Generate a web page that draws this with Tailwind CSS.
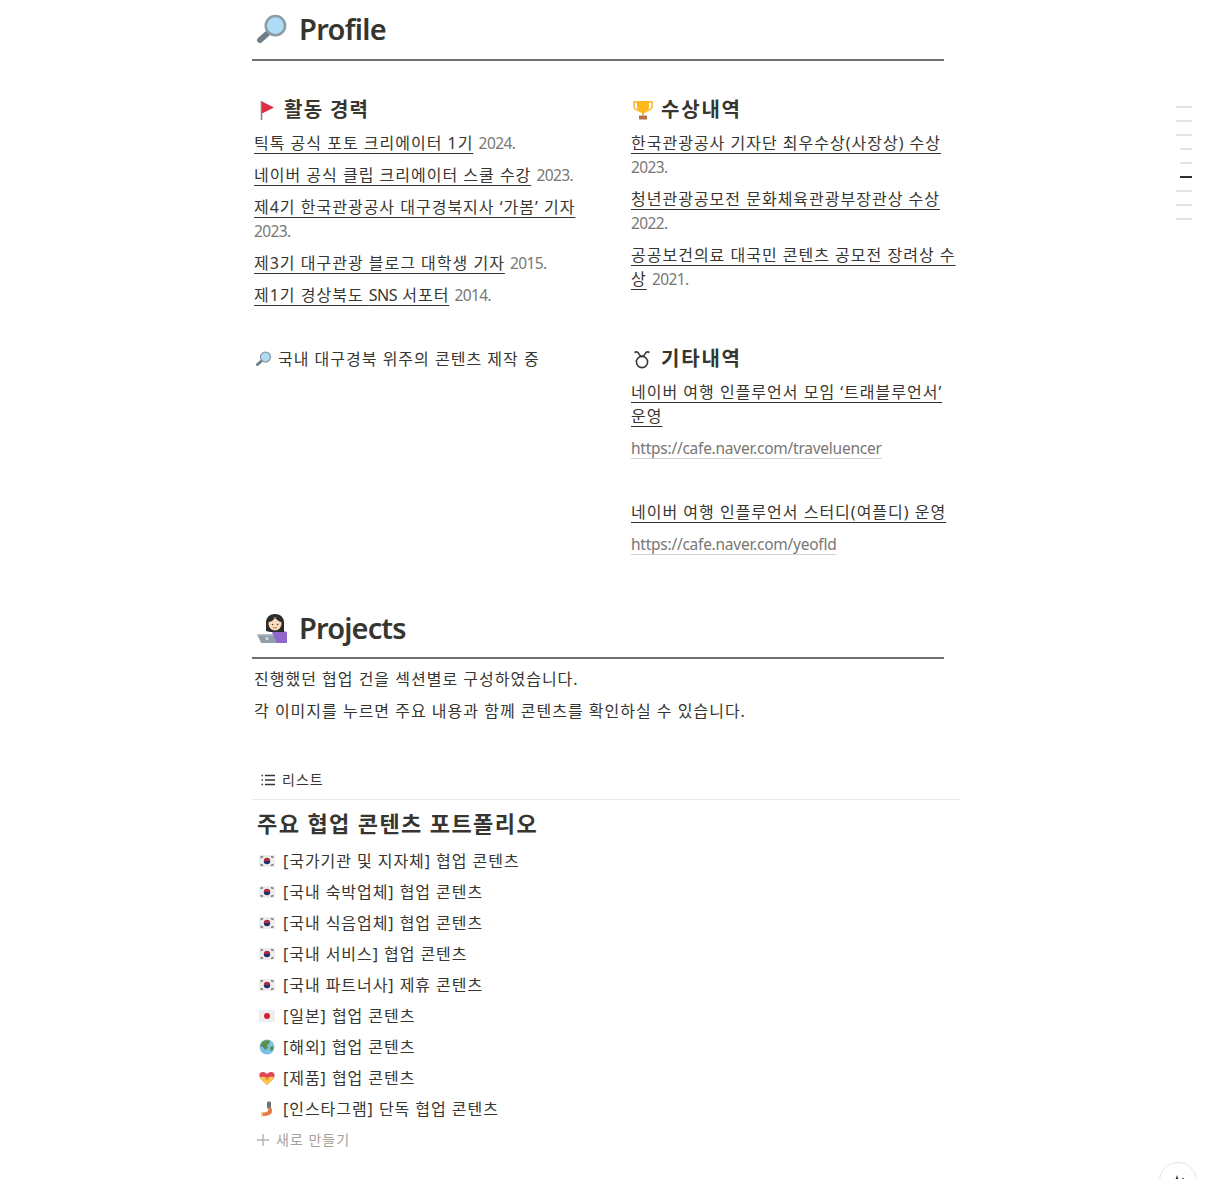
<!doctype html>
<html lang="ko">
<head>
    <meta charset="UTF-8">
    <title>Portfolio</title>
    <script src="https://cdn.jsdelivr.net/npm/@tailwindcss/browser@4"></script>
</head>
<body class="bg-white">
<div class="relative h-[1179px] overflow-hidden font-['Noto_Sans','Noto_Sans_CJK_KR',sans-serif] text-[16px] leading-6 tracking-[1px] text-[#37352f]">
    <main class="ml-[252px] w-[708px]">
        <!-- profile -->
        <div class="w-[692px] h-[61px] border-b-2 border-[#6f6f6f] flex items-center gap-[11px] pl-[5px] pb-[1px]">
            <svg class="w-[31px] h-[31px]" viewBox="0 0 32 32">
                <path d="M12 19 L3 27" stroke="#6f7f8a" stroke-width="6" stroke-linecap="round"/>
                <circle cx="19" cy="12" r="10" fill="#aedcf7" stroke="#8b9ba6" stroke-width="2.5"/>
            </svg>
            <h1 class="text-[29px] leading-10 font-semibold tracking-[-0.7px]">Profile</h1>
        </div>

        <div class="flex gap-[46px] mt-[33px]">
            <section class="w-[331px] px-[2px]">
                <h3 class="flex items-center gap-[6px] text-[20px] leading-[32px] font-bold tracking-[1.3px] pl-[4px]">
                    <svg class="w-[20px] h-[20px]" viewBox="0 0 20 20">
                        <path d="M3.5 1 V20" stroke="#7d8890" stroke-width="1.6"/>
                        <path d="M4 1.5 L16 7.5 L4 13.5 Z" fill="#dd2e44"/>
                    </svg>
                    활동 경력
                </h3>
                <div class="flex flex-col gap-2 mt-[5px]">
                    <p><span class="underline underline-offset-[4px] [text-decoration-skip-ink:none]">틱톡 공식 포토 크리에이터 1기</span> <span class="text-[#787774] text-[15.5px] tracking-[-0.6px]">2024.</span></p>
                    <p><span class="underline underline-offset-[4px] [text-decoration-skip-ink:none]">네이버 공식 클립 크리에이터 스쿨 수강</span> <span class="text-[#787774] text-[15.5px] tracking-[-0.6px]">2023.</span></p>
                    <p><span class="underline underline-offset-[4px] [text-decoration-skip-ink:none]">제4기 한국관광공사 대구경북지사 ‘가봄’ 기자</span> <span class="text-[#787774] text-[15.5px] tracking-[-0.6px]">2023.</span></p>
                    <p><span class="underline underline-offset-[4px] [text-decoration-skip-ink:none]">제3기 대구관광 블로그 대학생 기자</span> <span class="text-[#787774] text-[15.5px] tracking-[-0.6px]">2015.</span></p>
                    <p><span class="underline underline-offset-[4px] [text-decoration-skip-ink:none]">제1기 경상북도 <span class="tracking-[-0.5px]">SNS</span> 서포터</span> <span class="text-[#787774] text-[15.5px] tracking-[-0.6px]">2014.</span></p>
                </div>
                <p class="flex items-center gap-[6px] mt-[40px] pl-[2px]">
                    <svg class="w-[16px] h-[16px]" viewBox="0 0 32 32">
                        <path d="M12 19 L3 27" stroke="#6f7f8a" stroke-width="6" stroke-linecap="round"/>
                        <circle cx="19" cy="12" r="10" fill="#aedcf7" stroke="#8b9ba6" stroke-width="2.5"/>
                    </svg>
                    국내 대구경북 위주의 콘텐츠 제작 중
                </p>
            </section>

            <section class="w-[331px] px-[2px]">
                <h3 class="flex items-center gap-[8px] text-[20px] leading-[32px] font-bold tracking-[1.8px]">
                    <svg class="w-[20px] h-[20px] ml-[2px]" viewBox="0 0 20 20">
                        <path d="M4 2 H1 V6 Q1 10 6 10.5 M16 2 H19 V6 Q19 10 14 10.5" fill="none" stroke="#f9c04a" stroke-width="1.8"/>
                        <path d="M4 1 H16 V7 Q16 12 11 13 V15 H9 V13 Q4 12 4 7 Z" fill="#fcb91e"/>
                        <path d="M6 15.5 H14 V19.5 H6 Z" fill="#b5704a"/>
                    </svg>
                    수상내역
                </h3>
                <div class="flex flex-col gap-2 mt-[5px]">
                    <p><span class="underline underline-offset-[4px] [text-decoration-skip-ink:none]">한국관광공사 기자단 최우수상(사장상) 수상</span> <span class="text-[#787774] text-[15.5px] tracking-[-0.6px]">2023.</span></p>
                    <p><span class="underline underline-offset-[4px] [text-decoration-skip-ink:none]">청년관광공모전 문화체육관광부장관상 수상</span> <span class="text-[#787774] text-[15.5px] tracking-[-0.6px]">2022.</span></p>
                    <p><span class="underline underline-offset-[4px] [text-decoration-skip-ink:none]">공공보건의료 대국민 콘텐츠 공모전 장려상 수상</span> <span class="text-[#787774] text-[15.5px] tracking-[-0.6px]">2021.</span></p>
                </div>
                <h3 class="flex items-center gap-[8px] text-[20px] leading-[32px] font-bold tracking-[1.8px] mt-[52px]">
                    <svg class="w-[20px] h-[20px] ml-[2px]" viewBox="0 0 20 20" fill="none" stroke="#37352f" stroke-width="1.6">
                        <circle cx="9" cy="13" r="5.6"/>
                        <path d="M1.5 3.5 Q4.5 1.8 6 5 Q7 7.4 9 7.4 Q11 7.4 12 5 Q13.5 1.8 16.5 3.5"/>
                    </svg>
                    기타내역
                </h3>
                <div class="flex flex-col gap-2 mt-[5px]">
                    <p class="underline underline-offset-[4px] [text-decoration-skip-ink:none]">네이버 여행 인플루언서 모임 ‘트래블루언서’ 운영</p>
                    <p class="text-[#787774] text-[15.5px] tracking-[-0.25px] underline decoration-[#d3d3d1] underline-offset-[4px] [text-decoration-skip-ink:none]">https://cafe.naver.com/traveluencer</p>
                    <p class="mt-[32px] underline underline-offset-[4px] [text-decoration-skip-ink:none]">네이버 여행 인플루언서 스터디(여플디) 운영</p>
                    <p class="text-[#787774] text-[15.5px] tracking-[-0.25px] underline decoration-[#d3d3d1] underline-offset-[4px] [text-decoration-skip-ink:none]">https://cafe.naver.com/yeofld</p>
                </div>
            </section>
        </div>

        <!-- projects -->
        <div class="w-[692px] h-[61px] border-b-2 border-[#6f6f6f] flex items-center gap-[11px] pl-[4px] mt-[42px]">
            <svg class="w-[32px] h-[32px]" viewBox="0 0 32 32">
                <path d="M16 15 Q22 15 24 18 L31 20 V31 H17 Z" fill="#9266cc"/>
                <path d="M10 19 V10 Q11 2 19 2 Q27 2 28 10 V20 L24 20 H14 Z" fill="#2b2b2b"/>
                <circle cx="19" cy="12" r="6.5" fill="#fadcbc"/>
                <path d="M13 10 Q17 9 19 6 Q22 9 25 10 L25 6 H13 Z" fill="#2b2b2b"/>
                <circle cx="16.5" cy="12.5" r="0.8" fill="#60352a"/>
                <circle cx="21.5" cy="12.5" r="0.8" fill="#60352a"/>
                <path d="M17 15.5 Q19 16.8 21 15.5" stroke="#c1694f" fill="none"/>
                <path d="M1 22 H17 L21 31 H5 Z" fill="#8f9ea8"/>
                <path d="M1 22 H17 V23.5 H1 Z" fill="#b6c2ca"/>
                <circle cx="11" cy="26.5" r="1.6" fill="#d5dde2"/>
            </svg>
            <h1 class="text-[29px] leading-10 font-semibold tracking-[-0.85px]">Projects</h1>
        </div>
        <div class="flex flex-col gap-2 mt-[8px] px-[2px]">
            <p>진행했던 협업 건을 섹션별로 구성하였습니다.</p>
            <p>각 이미지를 누르면 주요 내용과 함께 콘텐츠를 확인하실 수 있습니다.</p>
        </div>

        <!-- list view -->
        <div class="flex items-center gap-[7px] mt-[44px] h-[24px] pt-[2px] pl-[9px] text-[14px]">
            <svg class="w-[14px] h-[14px]" viewBox="0 0 14 14" fill="none" stroke="#37352f" stroke-width="1.4">
                <path d="M4 2.5 H14 M4 7 H14 M4 11.5 H14"/>
                <path d="M0.5 2.5 H2 M0.5 7 H2 M0.5 11.5 H2"/>
            </svg>
            리스트
        </div>
        <div class="h-px bg-[#e9e9e7] mt-[8px]"></div>
        <h2 class="text-[22px] leading-[30px] font-bold tracking-[1.4px] pl-[5px] mt-[8px]">주요 협업 콘텐츠 포트폴리오</h2>
        <ul class="mt-[7px] flex flex-col tracking-[0.95px]">
            <li class="h-[31px] flex items-center gap-[8px] pl-[7px]">
                <svg class="w-[16px] h-[16px]" viewBox="0 0 16 16"><rect y="2" width="16" height="12" fill="#eeeeee"/><path d="M4.8 8 a3.2 3.2 0 0 1 6.4 0Z" fill="#b02a3f"/><path d="M4.8 8 a3.2 3.2 0 0 0 6.4 0Z" fill="#1f2f70"/><path d="M1.5 4.5 L4 3.5 M1.5 11.5 L4 12.5 M12 3.5 L14.5 4.5 M12 12.5 L14.5 11.5" stroke="#777" stroke-width="1.4"/></svg>
                [국가기관 및 지자체] 협업 콘텐츠
            </li>
            <li class="h-[31px] flex items-center gap-[8px] pl-[7px]">
                <svg class="w-[16px] h-[16px]" viewBox="0 0 16 16"><rect y="2" width="16" height="12" fill="#eeeeee"/><path d="M4.8 8 a3.2 3.2 0 0 1 6.4 0Z" fill="#b02a3f"/><path d="M4.8 8 a3.2 3.2 0 0 0 6.4 0Z" fill="#1f2f70"/><path d="M1.5 4.5 L4 3.5 M1.5 11.5 L4 12.5 M12 3.5 L14.5 4.5 M12 12.5 L14.5 11.5" stroke="#777" stroke-width="1.4"/></svg>
                [국내 숙박업체] 협업 콘텐츠
            </li>
            <li class="h-[31px] flex items-center gap-[8px] pl-[7px]">
                <svg class="w-[16px] h-[16px]" viewBox="0 0 16 16"><rect y="2" width="16" height="12" fill="#eeeeee"/><path d="M4.8 8 a3.2 3.2 0 0 1 6.4 0Z" fill="#b02a3f"/><path d="M4.8 8 a3.2 3.2 0 0 0 6.4 0Z" fill="#1f2f70"/><path d="M1.5 4.5 L4 3.5 M1.5 11.5 L4 12.5 M12 3.5 L14.5 4.5 M12 12.5 L14.5 11.5" stroke="#777" stroke-width="1.4"/></svg>
                [국내 식음업체] 협업 콘텐츠
            </li>
            <li class="h-[31px] flex items-center gap-[8px] pl-[7px]">
                <svg class="w-[16px] h-[16px]" viewBox="0 0 16 16"><rect y="2" width="16" height="12" fill="#eeeeee"/><path d="M4.8 8 a3.2 3.2 0 0 1 6.4 0Z" fill="#b02a3f"/><path d="M4.8 8 a3.2 3.2 0 0 0 6.4 0Z" fill="#1f2f70"/><path d="M1.5 4.5 L4 3.5 M1.5 11.5 L4 12.5 M12 3.5 L14.5 4.5 M12 12.5 L14.5 11.5" stroke="#777" stroke-width="1.4"/></svg>
                [국내 서비스] 협업 콘텐츠
            </li>
            <li class="h-[31px] flex items-center gap-[8px] pl-[7px]">
                <svg class="w-[16px] h-[16px]" viewBox="0 0 16 16"><rect y="2" width="16" height="12" fill="#eeeeee"/><path d="M4.8 8 a3.2 3.2 0 0 1 6.4 0Z" fill="#b02a3f"/><path d="M4.8 8 a3.2 3.2 0 0 0 6.4 0Z" fill="#1f2f70"/><path d="M1.5 4.5 L4 3.5 M1.5 11.5 L4 12.5 M12 3.5 L14.5 4.5 M12 12.5 L14.5 11.5" stroke="#777" stroke-width="1.4"/></svg>
                [국내 파트너사] 제휴 콘텐츠
            </li>
            <li class="h-[31px] flex items-center gap-[8px] pl-[7px]">
                <svg class="w-[16px] h-[16px]" viewBox="0 0 16 16"><rect y="2" width="16" height="12" fill="#eeeeee"/><circle cx="8" cy="8" r="3" fill="#dc1f2d"/></svg>
                [일본] 협업 콘텐츠
            </li>
            <li class="h-[31px] flex items-center gap-[8px] pl-[7px]">
                <svg class="w-[16px] h-[16px]" viewBox="0 0 16 16"><circle cx="8" cy="8" r="7.5" fill="#7cc0e8"/><path d="M3 3 Q6 0.5 11 1.5 L10 5 L8 6 L9 9 L6 11 L4 8 L1 7 Z" fill="#5c8f4d"/><path d="M11 8 L14.5 7 L14 11 L11.5 12 Z" fill="#5c8f4d"/></svg>
                [해외] 협업 콘텐츠
            </li>
            <li class="h-[31px] flex items-center gap-[8px] pl-[7px]">
                <svg class="w-[16px] h-[16px]" viewBox="0 0 16 16"><path d="M8 15 L1 8 Q-1 3 3 2 Q6 1.5 8 4 Q10 1.5 13 2 Q17 3 15 8 Z" fill="#e0475a"/><path d="M0.8 7 Q5 6 8 8 Q11 6 15.2 7 L13 10 L8 15 L3 10 Z" fill="#fbc94c"/><path d="M6 8 H10 V10.5 H6 Z" fill="#f0a030"/></svg>
                [제품] 협업 콘텐츠
            </li>
            <li class="h-[31px] flex items-center gap-[8px] pl-[7px]">
                <svg class="w-[16px] h-[16px]" viewBox="0 0 16 16"><rect x="8" y="0.5" width="4" height="7" rx="1" fill="#66757f"/><path d="M12 6 Q14 10 12 13 Q9 15.5 3 15 L3 11.5 Q7 12 9 10 L9.5 7 Z" fill="#e0784a"/><path d="M2 11 H4 V15.5 H2 Z" fill="#fbc37a"/></svg>
                [인스타그램] 단독 협업 콘텐츠
            </li>
            <li class="h-[31px] flex items-center gap-[7px] pl-[5px] text-[14px] tracking-[1px] text-[#a5a29a]">
                <svg class="w-[12px] h-[12px]" viewBox="0 0 12 12" stroke="#b5b3ad" stroke-width="1.4"><path d="M6 0 V12 M0 6 H12"/></svg>
                새로 만들기
            </li>
        </ul>
    </main>

    <!-- outline nav -->
    <div class="absolute top-[106px] right-[20px] flex flex-col items-end gap-3">
        <div class="w-4 h-[2px] bg-[#e4e4e2]"></div>
        <div class="w-4 h-[2px] bg-[#e4e4e2]"></div>
        <div class="w-4 h-[2px] bg-[#e4e4e2]"></div>
        <div class="w-3 h-[2px] bg-[#e4e4e2]"></div>
        <div class="w-3 h-[2px] bg-[#e4e4e2]"></div>
        <div class="w-3 h-[2px] bg-[#2f2f2f]"></div>
        <div class="w-4 h-[2px] bg-[#e4e4e2]"></div>
        <div class="w-4 h-[2px] bg-[#e4e4e2]"></div>
        <div class="w-4 h-[2px] bg-[#e4e4e2]"></div>
    </div>

    <!-- ai button -->
    <button class="absolute left-[1159px] top-[1162px] w-[38px] h-[38px] rounded-full bg-white border border-[#e3e3e1] flex justify-center pt-[11px]">
        <svg class="w-[14px] h-[14px]" viewBox="0 0 14 14" fill="#2f2f2f"><path d="M6 1 L7.2 4.8 L11 6 L7.2 7.2 L6 11 L4.8 7.2 L1 6 L4.8 4.8 Z"/><circle cx="12" cy="5" r="1"/></svg>
    </button>
</div>
</body>
</html>
